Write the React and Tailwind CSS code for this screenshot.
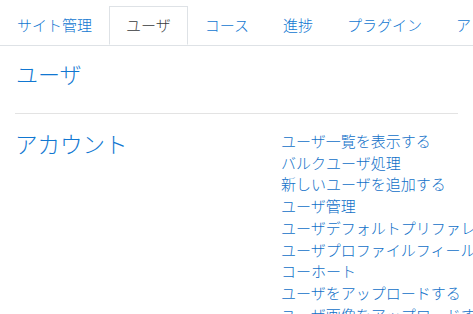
import React from 'react';

const TABS = ['サイト管理', 'ユーザ', 'コース', '進捗', 'プラグイン', 'アピアランス', 'サーバ'];

const LINKS = [
  'ユーザ一覧を表示する',
  'バルクユーザ処理',
  '新しいユーザを追加する',
  'ユーザ管理',
  'ユーザデフォルトプリファレンス',
  'ユーザプロファイルフィールド',
  'コーホート',
  'ユーザをアップロードする',
  'ユーザ画像をアップロードする',
];

export default function App() {
  return (
    <div
      className="w-[473px] h-[314px] overflow-hidden bg-white"
      style={{ fontFamily: '"Noto Sans CJK JP", "Noto Sans", sans-serif' }}
    >
      {/* tab strip */}
      <div className="pt-[6px]">
        <ul className="flex whitespace-nowrap border-b border-[#dee2e6]">
          {TABS.map((t) => {
            const active = t === 'ユーザ';
            return (
              <li
                key={t}
                className={
                  active
                    ? 'h-[39px] px-4 border border-[#dee2e6] border-b-white -mb-px bg-white flex items-center text-[15px] font-light text-[#373a3c] shrink-0'
                    : 'h-[39px] px-4 border border-transparent flex items-center text-[15px] font-light text-[#1177d1] shrink-0'
                }
              >
                {t}
              </li>
            );
          })}
        </ul>
      </div>

      <div className="px-[15px]">
        <h2 className="mt-[14px] pl-px text-[22px] leading-[26px] font-light text-[#1177d1] whitespace-nowrap">ユーザ</h2>
        <div className="mt-[27px] border-t border-[#e3e3e3]" />

        <div className="mt-[16px] flex">
          <h3 className="w-[266px] shrink-0 text-[22.5px] leading-[27px] font-light text-[#1177d1] whitespace-nowrap">
            アカウント
          </h3>
          <ul className="text-[15px] leading-[21.7px] font-light text-[#1070c8] whitespace-nowrap">
            {LINKS.map((l) => (
              <li key={l}>{l}</li>
            ))}
          </ul>
        </div>
      </div>
    </div>
  );
}
